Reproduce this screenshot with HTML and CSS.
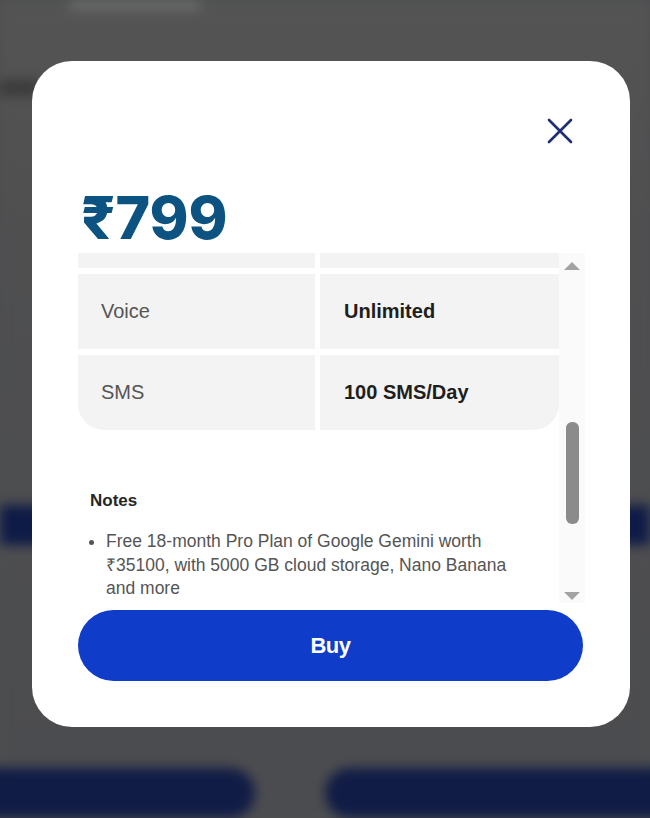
FILE: index.html
```html
<!DOCTYPE html>
<html lang="en">
<head>
  <meta charset="UTF-8" />
  <meta name="viewport" content="width=device-width, initial-scale=1" />
  <title>Plan details</title>
  <link rel="stylesheet" href="styles.css">
</head>
<body>

  <!-- page behind the popup, blurred -->
  <div class="page">
    <div class="page-top"><span class="blob"></span></div>
    <div class="page-row"><span class="blob dark"></span></div>
    <div class="page-band"></div>
    <div class="page-foot">
      <span class="ghost-btn"></span>
      <span class="ghost-btn"></span>
    </div>
  </div>

  <div class="overlay">
    <div class="modal">
      <div class="modal-head">
        <button class="close" aria-label="Close">
          <svg width="26" height="26" viewBox="0 0 26 26">
            <path d="M2 2 L24 24 M24 2 L2 24" stroke="#1d2e74" stroke-width="2.6" stroke-linecap="round" fill="none"/>
          </svg>
        </button>
      </div>

      <h1 class="price">₹799</h1>

      <div class="scroll-area">
        <div class="scroll-content">
          <!-- list is scrolled: first row only peeks in at the top -->
          <div class="benefits">
            <div class="cell"></div>
            <div class="cell val"></div>
            <div class="cell">Voice</div>
            <div class="cell val">Unlimited</div>
            <div class="cell last-l">SMS</div>
            <div class="cell val last-r">100 SMS/Day</div>
          </div>

          <div class="notes">
            <h4>Notes</h4>
            <ul>
              <li>Free 18-month Pro Plan of Google Gemini worth ₹35100, with 5000 GB cloud storage, Nano Banana and more</li>
            </ul>
          </div>
        </div>

        <div class="scrollbar">
          <span class="arrow up"></span>
          <div class="track"><span class="thumb"></span></div>
          <span class="arrow down"></span>
        </div>
      </div>

      <button class="buy">Buy</button>
    </div>
  </div>

</body>
</html>
```

FILE: styles.css
```css
body {
  margin: 0;
  width: 650px;
  height: 818px;
  overflow: hidden;
  font-family: "Liberation Sans", Arial, sans-serif;
  background: #4d4e51;
}

/* fondo */
.page {
  height: 818px;
  display: flex;
  flex-direction: column;
  filter: blur(6px);
  background: linear-gradient(#545454, #4f4f50 30%, #4b4c4f);
}
.page-top {
  height: 60px;
  padding-left: 70px;
}
.page-top .blob {
  display: block;
  width: 130px;
  height: 10px;
  background: #6b6b6b;
}
.page-row {
  height: 445px;
}
.page-row .blob {
  display: block;
  width: 40px;
  height: 16px;
  margin-top: 20px;
  background: #3a3a3a;
}
.page-band {
  height: 40px;
  background: #0f1b47;
}
.page-foot {
  margin-top: auto;
  height: 50px;
  display: flex;
  gap: 70px;
}
.ghost-btn {
  flex: 1;
  background: #111c46;
  border-radius: 25px;
}
.ghost-btn:first-child {
  flex: 0 0 295px;
  margin-left: -40px;
}
.ghost-btn:last-child {
  margin-right: -40px;
}

/* popup */
.overlay {
  position: fixed;
  top: 0;
  left: 0;
  right: 0;
  bottom: 0;
  display: flex;
  align-items: flex-start;
  padding: 61px 0 0 32px;
}
.modal {
  width: 598px;
  box-sizing: border-box;
  background: #fff;
  border-radius: 40px;
  padding: 0 45px 46px 46px;
}
.modal-head {
  display: flex;
  justify-content: flex-end;
  padding: 57px 12px 0 0;
}
.close {
  background: none;
  border: none;
  padding: 0;
  width: 26px;
  height: 26px;
  cursor: pointer;
}
.close svg {
  display: block;
}
.price {
  margin: 39px 0 0 3px;
  font-family: Inter, "Noto Sans", sans-serif;
  font-weight: 800;
  font-size: 59px;
  line-height: 70px;
  color: #0c5381;
}

.scroll-area {
  display: flex;
  height: 350px;
}
.scroll-content {
  flex: 1;
  overflow: hidden;
}
.benefits {
  display: grid;
  grid-template-columns: 237px 1fr;
  grid-auto-rows: 75px;
  gap: 6px 5px;
  margin-top: -60px;
}
.cell {
  background: #f3f3f3;
  display: flex;
  align-items: center;
  padding-left: 23px;
  font-size: 20px;
  color: #555;
}
.cell.val {
  padding-left: 24px;
  font-weight: bold;
  color: #1e1e1e;
}
.cell.last-l {
  border-bottom-left-radius: 26px;
}
.cell.last-r {
  border-bottom-right-radius: 26px;
}

.notes {
  padding: 61px 40px 0 12px;
}
.notes h4 {
  margin: 0 0 19px 0;
  font-size: 17px;
  color: #262626;
}
.notes ul {
  margin: 0;
  padding-left: 16px;
  font-size: 17.5px;
  line-height: 23.5px;
  color: #555;
}

.scrollbar {
  width: 26px;
  background: #fafafa;
  display: flex;
  flex-direction: column;
  align-items: center;
  padding: 9px 0 3px 0;
  box-sizing: border-box;
}
.arrow {
  width: 0;
  height: 0;
  border-left: 8px solid transparent;
  border-right: 8px solid transparent;
}
.arrow.up {
  border-bottom: 8px solid #a3a3a3;
}
.arrow.down {
  border-top: 8px solid #a3a3a3;
}
.track {
  flex: 1;
  width: 100%;
  display: flex;
  justify-content: center;
  padding-top: 152px;
}
.thumb {
  width: 13px;
  height: 102px;
  border-radius: 6px;
  background: #8b8b8b;
}

.buy {
  display: block;
  width: 505px;
  height: 71px;
  margin-top: 7px;
  border: none;
  border-radius: 36px;
  background: #0f3cc8;
  color: #fff;
  font-family: "Liberation Sans", Arial, sans-serif;
  font-size: 22px;
  font-weight: bold;
  letter-spacing: -0.5px;
  cursor: pointer;
}
```
